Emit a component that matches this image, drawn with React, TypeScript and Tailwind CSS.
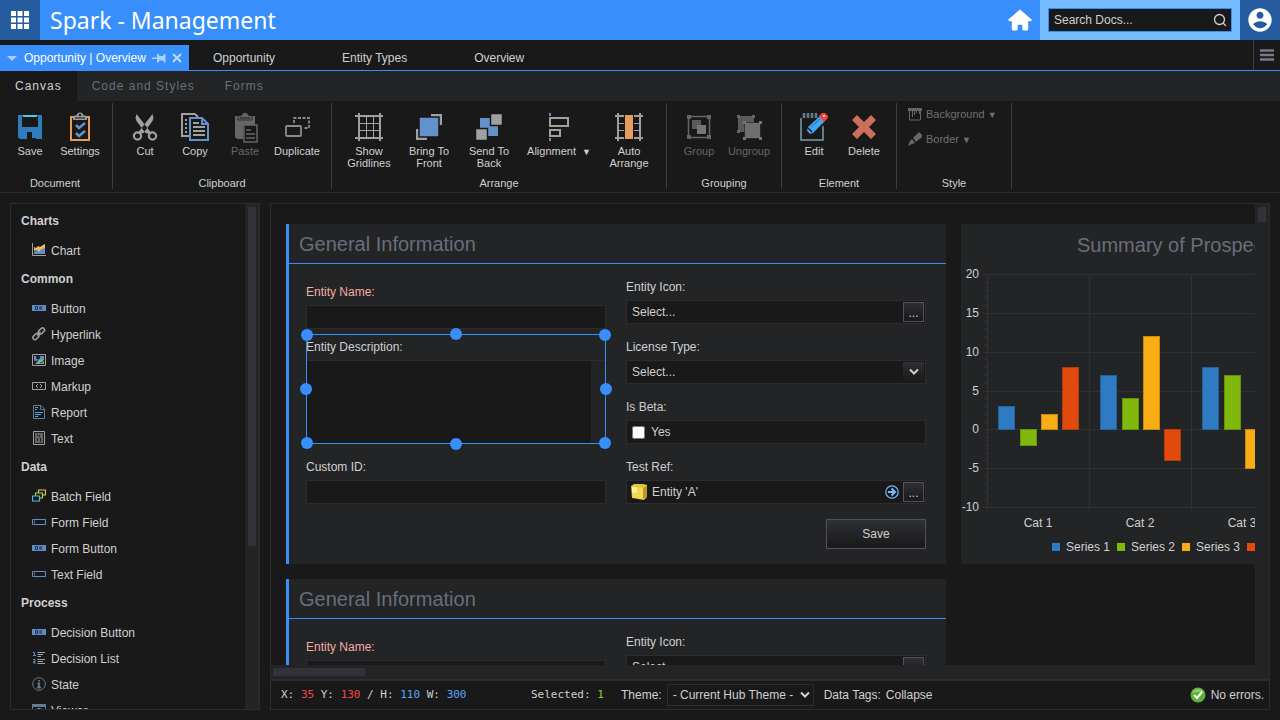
import { useState } from "react";
import type { ReactNode } from "react";
import { RiAccountCircleFill } from "react-icons/ri";
import { TiHome } from "react-icons/ti";

const ribbonIcons: Record<string, ReactNode> = {
  save: (
    <>
      <path d="M4 4h24v24H6l-2-2z" fill="#2e7bbd" />
      <path d="M8 5h16v11H8z" fill="#191919" />
      <path d="M9 4h14v2H9z" fill="#56c4e8" />
      <path d="M13 21h9v7h-9z" fill="#191919" />
      <path d="M18 21h4v6h-4z" fill="#2e7bbd" />
    </>
  ),
  settings: (
    <>
      <path d="M7 6h18v23H7z" fill="none" stroke="#e69c5a" strokeWidth="2" />
      <path d="M9 9V6q0-1.5 2-1.5h1.5q.5-3 3.500-3t3.500 3H21q2 0 2 1.500v3z" fill="#999" />
      <path d="M11 7h10" stroke="#191919" />
      <circle cx="16" cy="4" r="1.2" fill="#191919" />
      <path d="m12 14 3 3 6-5M12 22l3 3 6-5" fill="none" stroke="#6391cb" strokeWidth="2.5" />
    </>
  ),
  cut: (
    <>
      <path d="M7.500 3 6.500 7l1 3 9 12 4 1 1-2zM23.500 3l1 4-1 3-9 12-4 1-1-2z" fill="#a0a0a0" />
      <g fill="#191919" stroke="#a0a0a0" strokeWidth="2.2">
        <circle cx="8.5" cy="25" r="3.600" />
        <circle cx="23.5" cy="25" r="3.600" />
      </g>
      <circle cx="15.5" cy="18" r="1" fill="#191919" />
    </>
  ),
  copy: (
    <>
      <path d="M16 3H3v22h7M16 3l3 3" fill="none" stroke="#a0a0a0" strokeWidth="2" />
      <path d="M6 9h2M6 13h2M6 17h2M6 21h2" stroke="#a0a0a0" strokeWidth="2" />
      <path d="M11 7h12l6 6v16H11z" fill="#191919" stroke="#6391cb" strokeWidth="2" />
      <path d="M23 7v6h6" fill="none" stroke="#6391cb" strokeWidth="2" />
      <path d="M14 12h6M14 16h12M14 20h12M14 24h12" stroke="#a0a0a0" strokeWidth="2" />
    </>
  ),
  paste: (
    <>
      <path d="M6 5h20v9H14v14H8l-2-2z" fill="#666" />
      <path d="M9 9V6q0-1.500 2-1.500h1.500q.5-3 3.500-3t3.500 3H21q2 0 2 1.500v3z" fill="#666" stroke="#191919" strokeWidth=".7" />
      <path d="M11 7h10" stroke="#191919" />
      <path d="M15 14h13v17H15z" fill="#191919" stroke="#666" strokeWidth="1.500" />
      <path d="M17 19h5M17 23h9M17 27h9" stroke="#666" strokeWidth="1.500" />
    </>
  ),
  duplicate: (
    <g fill="none" stroke="#8a8a8a" strokeWidth="1.800">
      <path d="M13 12V7h15v10h-6" strokeDasharray="3 1.500" />
      <rect x="5" y="15" width="15" height="10" rx="1" />
    </g>
  ),
  gridlines: (
    <g stroke="#a0a0a0">
      <path d="M6 2v28M27 2v28M2 5h28M2 27h28" strokeWidth="2" />
      <path d="M13.500 5v22M20.500 5v22M6 12.500h21M6 19.500h21" />
    </g>
  ),
  front: (
    <>
      <path d="M18 3h11v11H18zM3 18h11v11H3z" fill="#a0a0a0" />
      <path d="M6 6h20v20H6z" fill="#6391cb" stroke="#191919" strokeWidth="1.500" />
    </>
  ),
  back: (
    <>
      <path d="M7 7h18v18H7z" fill="#6391cb" />
      <path d="M17.500 2.500h12v12h-12zM2.500 17.500h12v12h-12z" fill="#a0a0a0" stroke="#191919" strokeWidth="1.500" />
    </>
  ),
  alignment: (
    <>
      <path d="M7 2v3M7 27v3" stroke="#6391cb" strokeWidth="2" />
      <path d="M7 7h18v8H7zM7 19h10v6H7z" fill="none" stroke="#a0a0a0" strokeWidth="2" />
    </>
  ),
  auto: (
    <>
      <g stroke="#a0a0a0">
        <path d="M5 2v28M27 2v28M2 5h28M2 27h28" strokeWidth="2" />
        <path d="M5 12.500h22M5 19.500h22" />
      </g>
      <path d="M11 3h10v26H11z" fill="#191919" />
      <path d="M12 4h8v24h-8z" fill="#e69c5a" />
    </>
  ),
  group: (
    <>
      <path d="M5.500 5.500h21v21h-21z" fill="none" stroke="#666" strokeWidth="1.500" />
      <path d="M4 4h4v4H4zM24 4h4v4h-4zM4 24h4v4H4zM24 24h4v4h-4z" fill="#666" />
      <path d="M9 9h9v9H9z" fill="#5a5a5a" />
      <path d="M14 14h9v9h-9z" fill="#757575" />
    </>
  ),
  ungroup: (
    <>
      <path d="M5 5h16v16H5z" fill="#5a5a5a" />
      <path d="M4 4h3v3H4zM19 4h3v3h-3zM4 19h3v3H4z" fill="#666" />
      <path d="M11.500 11.500h16v16h-16z" fill="#6f6f6f" stroke="#191919" strokeWidth=".6" />
      <path d="M10 10h3v3h-3zM26 10h3v3h-3zM10 26h3v3h-3zM26 26h3v3h-3z" fill="#757575" />
    </>
  ),
  edit: (
    <>
      <path d="M3 7v22h22V15" fill="none" stroke="#607d8b" strokeWidth="2" />
      <path d="M6 2v5M10 2v5M14 2v5M18 2v5" stroke="#607d8b" strokeWidth="2.500" />
      <path d="m8 24 2-8 12-11 5 5-12 12z" fill="#42a5f5" />
      <path d="m10 17 4 4M8 24l3-1-2-2z" stroke="#191919" strokeWidth="1.500" />
      <path d="m13 16 9-8" stroke="#1976b8" />
      <path d="m21 5 3-3h3l3 3v2l-4 4z" fill="#f44336" />
      <circle cx="26" cy="5" r="1" fill="#fff" />
    </>
  ),
  delete: <path d="m9 4 7 7 7-7 5 5-7 7 7 7-5 5-7-7-7 7-5-5 7-7-7-7z" fill="#c96f5c" />,
};

const itemIcons: Record<string, ReactNode> = {
  ok: (
    <>
      <path d="M0 4h14v6H0z" fill="#5f8dc9" />
      <path d="M3.500 5.500h2v3h-2zM8 5v4M10.500 5 8.500 7l2 2" fill="none" stroke="#20304a" />
    </>
  ),
  field: (
    <>
      <path d="M.5 4.500h13v5H.5z" fill="none" stroke="#5f8dc9" />
      <path d="M2.500 5.500v3" stroke="#777" />
    </>
  ),
  chart: (
    <>
      <path d="M2 11V9l3-2 3 1 3-3 2-1v7z" fill="#5f8dc9" />
      <path d="M2 8V4l2 1 2-2 2 1 3-2 2-1v4l-3 1-3 3-2-2z" fill="#e6bd69" />
      <path d="M.5 0v12.500H14" fill="none" stroke="#a0a0a0" />
    </>
  ),
  link: (
    <g fill="none" stroke="#a0a0a0" strokeWidth="1.500">
      <rect x="-3.500" y="-2" width="7" height="4" rx="2" transform="translate(4 9.500) rotate(-45)" />
      <rect x="-3.500" y="-2" width="7" height="4" rx="2" transform="translate(9.500 4) rotate(-45)" />
      <path d="m5 8.500 3.500-3.500" />
    </g>
  ),
  image: (
    <>
      <path d="M.5 1.500h13v11H.5z" fill="#191919" stroke="#a0a0a0" />
      <path d="M2 3h10v5H2z" fill="#5f8dc9" />
      <path d="M2 11c3 0 3-4 6-4 2 0 2-1 4-1v5z" fill="#7ab08c" />
      <circle cx="6" cy="4.500" r="2" fill="#191919" />
      <path d="M2 8q3 1 4-1M8 10q3 0 4-3" fill="none" stroke="#283c46" />
    </>
  ),
  markup: (
    <>
      <path d="M.5 3.500h13v7H.5z" fill="none" stroke="#a0a0a0" />
      <path d="M6 5 4 7l2 2M8 5l2 2-2 2" fill="none" stroke="#a0a0a0" />
    </>
  ),
  report: (
    <>
      <path d="M1.500.5H9L12.500 4v9.500h-11z" fill="none" stroke="#607d8b" />
      <path d="M8.500 1v3.500H12" fill="none" stroke="#607d8b" />
      <path d="M3 2.500h3M3 4.500h2M3 7.500h8M3 9.500h6M3 11.500h3" stroke="#42a5f5" />
    </>
  ),
  text: (
    <>
      <path d="M1.500.5h11v13h-11z" fill="none" stroke="#a0a0a0" />
      <path d="M3 2h8v10H3z" fill="#656565" />
      <path d="M5.500 3v2M7.500 4v2M5.500 7v3M8.500 7v4" stroke="#222" />
    </>
  ),
  batch: (
    <g fill="#191919" strokeWidth="1.200">
      <path d="M6.500 1h7v5h-7z" stroke="#e6bd69" />
      <path d="M3.500 4h7v5h-7z" stroke="#9be03c" />
      <path d="M.5 7h7v5h-7z" stroke="#5bb5dc" />
    </g>
  ),
  list: (
    <>
      <path d="M1 1.500h1.500v3M1 4.500h3M1 8.500h2v2H1.500v1.500H4" fill="none" stroke="#5f8dc9" />
      <path d="M5.500 1.500H13M5.500 3.500H11M5.500 5.500H9M5.500 8.500H13M5.500 10.500H11M5.500 12.500H13" stroke="#a0a0a0" />
    </>
  ),
  state: (
    <>
      <circle cx="7" cy="7" r="6.300" fill="none" stroke="#607d8b" />
      <path d="M5.500 6.500H7v4M5 10.500h4M7 3v1.500" fill="none" stroke="#607d8b" strokeWidth="1.800" />
    </>
  ),
  viewer: (
    <>
      <path d="M.5 1.500h13v11H.5z" fill="none" stroke="#607d8b" />
      <path d="M0 1h14v3H0z" fill="#607d8b" />
      <circle cx="7" cy="8" r="3" fill="#42a5f5" />
    </>
  ),
};

const toolbox = [
  { title: "Charts", items: [["Chart", "chart"]] },
  {
    title: "Common",
    items: [
      ["Button", "ok"],
      ["Hyperlink", "link"],
      ["Image", "image"],
      ["Markup", "markup"],
      ["Report", "report"],
      ["Text", "text"],
    ],
  },
  {
    title: "Data",
    items: [
      ["Batch Field", "batch"],
      ["Form Field", "field"],
      ["Form Button", "ok"],
      ["Text Field", "field"],
    ],
  },
  {
    title: "Process",
    items: [
      ["Decision Button", "ok"],
      ["Decision List", "list"],
      ["State", "state"],
      ["Viewer", "viewer"],
    ],
  },
];

const seriesColors = [
  { fill: "#2e7bc1", stroke: "#22629d" },
  { fill: "#80b80c", stroke: "#66930a" },
  { fill: "#f8ad15", stroke: "#c88a0e" },
  { fill: "#e14a0c", stroke: "#b33c0b" },
];

const chartData = [
  { name: "Cat 1", values: [3, -2, 2, 8] },
  { name: "Cat 2", values: [7, 4, 12, -4] },
  { name: "Cat 3", values: [8, 7, -5, 4] },
];

function RibbonButton({ icon, label, width = "w-[50px]", disabled = false, arrow = false }: {
  icon: string;
  label: string;
  width?: string;
  disabled?: boolean;
  arrow?: boolean;
}) {
  return (
    <button
      disabled={disabled}
      className={`${width} flex flex-col items-center gap-0.5 text-[11px] leading-3 ${disabled ? "text-[#666]" : "text-[#d0d0d0]"}`}
    >
      <svg viewBox="0 0 32 32" className="size-8">{ribbonIcons[icon]}</svg>
      <span className={arrow ? "whitespace-nowrap" : "px-1"}>
        {label}
        {arrow && <span className="ml-1.5 text-[9px]">▼</span>}
      </span>
    </button>
  );
}

function RibbonGroup({ title, children, first = false }: { title: string; children: ReactNode; first?: boolean }) {
  return (
    <section className={`${first ? "pl-[5px]" : "pl-[7px]"} pr-[7px] flex flex-col justify-between border-r border-[#3c3c42]`}>
      <div className="flex pt-2">{children}</div>
      <h2 className="text-center text-[11px] leading-3 text-[#d0d0d0]">{title}</h2>
    </section>
  );
}

function Toolbox() {
  return (
    <aside className="w-[250px] shrink-0 flex border border-[#2d2d30] overflow-hidden">
      <div className="flex-1 pt-0.5">
        {toolbox.map((section) => (
          <section key={section.title}>
            <h3 className="h-8 pl-2.5 text-xs leading-[30px] font-bold">{section.title}</h3>
            {section.items.map(([label, icon]) => (
              <a key={label} href="#" className="h-[26px] pl-[21px] flex items-center gap-[5px] text-xs">
                <svg viewBox="0 0 14 14" className="size-3.5 mb-0.5">{itemIcons[icon]}</svg>
                {label}
              </a>
            ))}
          </section>
        ))}
      </div>
      <div className="w-3.5 bg-[#232426] p-[3px]">
        <div className="w-2 h-[68%] bg-[#323238]" />
      </div>
    </aside>
  );
}

const inputClass = "h-6 w-full bg-[#191919] border border-[#2d2d30]";
const labelClass = "block h-6 leading-[22px]";
const dotsClass = "w-[21px] h-5 shrink-0 border border-[#50505c] bg-linear-to-b from-[#2f3035] to-[#191919] leading-5";

const handles = [
  "left-[-5px] top-[-5px]",
  "left-[144px] top-[-6px]",
  "left-[293px] top-[-5px]",
  "left-[-6px] top-[49px]",
  "left-[294px] top-[49px]",
  "left-[-5px] top-[103px]",
  "left-[144px] top-[104px]",
  "left-[293px] top-[103px]",
];

function SelectionFrame() {
  return (
    <div className="absolute inset-0 border border-[#388efa] pointer-events-none">
      <div className="absolute -inset-px">
        {handles.map((pos) => (
          <span key={pos} className={`absolute size-3 rounded-full bg-[#388efa] ${pos}`} />
        ))}
      </div>
    </div>
  );
}

function Chevron() {
  return (
    <svg viewBox="0 0 10 8" className="w-2.5 h-2">
      <path d="m1 1.500 4 4 4-4" fill="none" stroke="#d0d0d0" strokeWidth="2" />
    </svg>
  );
}

function FormCard({ id, selected = false }: { id: string; selected?: boolean }) {
  return (
    <section className="w-[660px] shrink-0 pb-[15px] bg-[#232426] border-l-3 border-[#388efa] text-xs">
      <h2 className="h-10 pl-2.5 text-xl leading-10 text-[#6a6d7c] border-b border-b-[#388efa]">General Information</h2>
      <form className="grid grid-cols-2 gap-5 pl-[17px] pr-5 pt-3" onSubmit={(e) => e.preventDefault()}>
        <div className="pt-[5px]">
          <label htmlFor={`${id}-name`} className={`${labelClass} text-[#f2aca4]`}>Entity Name:</label>
          <input id={`${id}-name`} className={`${inputClass} block px-1`} />
          <div className="relative mt-[5px] h-[110px] pt-0.5">
            <label htmlFor={`${id}-desc`} className={labelClass}>Entity Description:</label>
            <div className="flex h-[84px] border border-[#2d2d30]">
              <textarea id={`${id}-desc`} className="flex-1 bg-[#191919] resize-none" />
              <div className="w-3.5" />
            </div>
            {selected && <SelectionFrame />}
          </div>
          <label htmlFor={`${id}-custom`} className={`${labelClass} mt-3`}>Custom ID:</label>
          <input id={`${id}-custom`} className={`${inputClass} block px-1`} />
        </div>
        <div className="flex flex-col">
          <span className={labelClass}>Entity Icon:</span>
          <div className={`${inputClass} flex items-center justify-between pl-[5px] pr-px mb-3`}>
            <span>Select...</span>
            <button className={dotsClass} aria-label="Pick icon">...</button>
          </div>
          <label htmlFor={`${id}-license`} className={labelClass}>License Type:</label>
          <div className={`${inputClass} relative mb-3`}>
            <select id={`${id}-license`} className="appearance-none w-full h-[22px] pl-[5px] bg-[#191919] outline-none">
              <option>Select...</option>
            </select>
            <span className="absolute right-px top-px w-[21px] h-5 flex items-center justify-center bg-linear-to-b from-[#2f3035] to-[#191919] pointer-events-none">
              <Chevron />
            </span>
          </div>
          <span className={labelClass}>Is Beta:</span>
          <label className={`${inputClass} flex items-center gap-1.5 pl-[5px] mb-3`}>
            <input type="checkbox" className="size-[13px]" />
            Yes
          </label>
          <span className={labelClass}>Test Ref:</span>
          <div className={`${inputClass} flex items-center pl-1 pr-px mb-[15px]`}>
            <svg viewBox="0 0 16 16" className="size-4">
              <path d="m0 2 3-2h9l4 1v12l-3 3-12-2z" fill="#e3c53c" />
              <path d="m1 3 11 1v11L1 13z" fill="#f0da55" />
              <path d="m1 3 5 .5V8L1 9z" fill="#faf0a0" />
              <path d="m12 4 4-2v11l-4 2z" fill="#b99720" />
            </svg>
            <span className="ml-[5px] flex-1">Entity 'A'</span>
            <button aria-label="Open reference" className="mr-1">
              <svg viewBox="0 0 14 14" className="size-3.5" fill="none" stroke="#75bbff">
                <circle cx="7" cy="7" r="6.200" strokeWidth="1.200" />
                <path d="M3 7h7M6.500 3.500 10 7l-3.500 3.500" strokeWidth="2" />
              </svg>
            </button>
            <button className={dotsClass} aria-label="Pick reference">...</button>
          </div>
          <button className="self-end w-[100px] h-[30px] border border-[#50505c] bg-linear-to-b from-[#2f3035] to-[#191919]">
            Save
          </button>
        </div>
      </form>
    </section>
  );
}

const barX = [11, 33, 54, 75];

function ProspectsChart() {
  const y = (v: number) => Math.round(50 + ((20 - v) * 233) / 30);
  const ticks = [20, 15, 10, 5, 0, -5, -10];

  return (
    <section className="w-[440px] h-[340px] shrink-0 bg-[#232426]">
      <svg viewBox="0 0 440 340" className="w-full h-full text-xs" fill="#d0d0d0">
        <text x="116" y="28" className="text-xl" fill="#6a6d7c">Summary of Prospects</text>
        <g stroke="#2f3033">
          {ticks.map((t) => (
            <path key={t} d={`M22 ${y(t) + 0.5}H434`} />
          ))}
          {[0, 1, 2, 3].map((i) => (
            <path key={i} d={`M${26.5 + i * 102} 50v237`} />
          ))}
          {Array.from({ length: 31 }, (_, i) => (
            <path key={i} d={`M23 ${y(20 - i) + 0.5}h4`} />
          ))}
        </g>
        {ticks.map((t) => (
          <text key={t} x="18" y={y(t) + 4} textAnchor="end">{t}</text>
        ))}
        {chartData.map((cat, i) => (
          <g key={cat.name}>
            {cat.values.map((v, j) => (
              <rect
                key={j}
                x={26.5 + i * 102 + barX[j]}
                y={y(Math.max(v, 0)) + 0.5}
                width={16}
                height={Math.abs(y(v) - y(0))}
                fill={seriesColors[j].fill}
                stroke={seriesColors[j].stroke}
              />
            ))}
            <text x={77 + i * 102} y="303" textAnchor="middle">{cat.name}</text>
          </g>
        ))}
        {seriesColors.map((c, i) => (
          <g key={c.fill}>
            <rect x={91 + i * 65} y="319" width="8" height="8" fill={c.fill} />
            <text x={105 + i * 65} y="327">Series {i + 1}</text>
          </g>
        ))}
      </svg>
    </section>
  );
}

function StatusBar() {
  return (
    <footer className="h-[30px] shrink-0 flex items-center border-t-2 border-[#2d2d30] pl-2.5 pr-[5px] text-xs">
      <p className="w-[250px] font-['DejaVu_Sans_Mono',monospace] text-[11px] whitespace-pre">
        X: <span className="text-[#f04848]">35</span> Y: <span className="text-[#f04848]">130</span> / H:{" "}
        <span className="text-[#58a6ff]">110</span> W: <span className="text-[#58a6ff]">300</span>
      </p>
      <p className="w-[90px] font-['DejaVu_Sans_Mono',monospace] text-[11px]">
        Selected: <span className="text-[#7ed321]">1</span>
      </p>
      <label htmlFor="theme">Theme:</label>
      <div className="relative ml-[5px] mr-2.5">
        <select id="theme" className="appearance-none block w-[147px] h-[22px] pl-[5px] bg-[#191919] border border-[#2d2d30]">
          <option>- Current Hub Theme -</option>
        </select>
        <span className="absolute right-1 top-[7px] pointer-events-none"><Chevron /></span>
      </div>
      <span>Data Tags:</span>
      <button className="ml-[5px]">Collapse</button>
      <span className="ml-auto flex items-center gap-[5px]">
        <svg viewBox="0 0 16 16" className="size-4">
          <circle cx="8" cy="8" r="7.500" fill="#5fae3a" />
          <path d="M2 6a6.500 6.500 0 0 1 12 0q-6-2-12 0" fill="#8fd06a" />
          <path d="m4 8 3 3 5-6" fill="none" stroke="#fff" strokeWidth="2" />
        </svg>
        No errors.
      </span>
    </footer>
  );
}

export default function App() {
  const [tab, setTab] = useState("Canvas");

  return (
    <div className="h-screen flex flex-col bg-[#191919] text-[#d0d0d0] font-['Liberation_Sans',Arial,sans-serif] overflow-hidden">
      <header className="h-10 shrink-0 flex items-center bg-[#388efa]">
        <button className="size-10 flex items-center justify-center bg-[#245c9f]" aria-label="Apps">
          <svg viewBox="0 0 18 18" className="size-[18px]" fill="#fff">
            {[0, 1, 2].map((r) => [0, 1, 2].map((c) => (
              <rect key={`${r}${c}`} x={c * 6.5} y={r * 6.5} width="5" height="5" />
            )))}
          </svg>
        </button>
        <h1 className="ml-2.5 flex-1 font-['Noto_Sans',sans-serif] text-[23px] leading-[38px] text-white">Spark - Management</h1>
        <a href="#" className="mr-1.5 text-white" aria-label="Home"><TiHome size={28} /></a>
        <div className="w-[200px] h-10 p-2 bg-[#75bbff]">
          <div className="h-6 flex items-center bg-[#191919] border border-[#388efa] pl-[5px] pr-1">
            <input aria-label="Search Docs" placeholder="Search Docs..." className="flex-1 min-w-0 text-xs outline-none placeholder:text-[#d0d0d0]" />
            <svg viewBox="0 0 14 14" className="size-3.5" fill="none" stroke="#d0d0d0" strokeWidth="1.300">
              <circle cx="6.500" cy="6.500" r="5" />
              <path d="m10 10 3 3" />
            </svg>
          </div>
        </div>
        <button className="size-10 flex items-center justify-center bg-[#245c9f] text-white" aria-label="Account">
          <RiAccountCircleFill size={28} />
        </button>
      </header>

      {/* Open pages */}
      <nav className="h-[31px] shrink-0 flex items-end border-b border-[#388efa] text-xs">
        <div className="h-[25px] w-[189px] flex items-center bg-[#388efa] text-white pl-[7px] pt-px">
          <svg viewBox="0 0 10 5" className="w-2.5 h-[5px]"><path d="M0 0h10L5 5z" fill="#a9cffd" /></svg>
          <a href="#" className="ml-[7px]">Opportunity | Overview</a>
          <svg viewBox="0 0 14 10" className="w-3.5 h-2.5 ml-1.5" fill="#a9cffd">
            <path d="M0 4.500h5v1.500H0zM5 1h1.500l1 2H11l1-2h1.500v8.500H12l-1-2H7.500l-1 2H5z" />
          </svg>
          <button className="ml-1.5" aria-label="Close tab">
            <svg viewBox="0 0 10 10" className="size-2.5"><path d="m1 1 8 8M9 1 1 9" stroke="#bcdafd" strokeWidth="2" /></svg>
          </button>
        </div>
        {["Opportunity", "Entity Types", "Overview"].map((t) => (
          <a key={t} href="#" className="h-[25px] leading-[26px] pl-6 pr-[43px]">{t}</a>
        ))}
        <button className="ml-auto w-[27px] h-[30px] flex items-center justify-center border-l border-[#3c3c42]" aria-label="Menu">
          <svg viewBox="0 0 14 12" className="w-3.5 h-3"><path d="M0 1.500h14M0 6h14M0 10.500h14" stroke="#777a88" strokeWidth="2.400" /></svg>
        </button>
      </nav>

      {/* Ribbon */}
      <div className="h-[30px] shrink-0 flex bg-[#232426] text-xs tracking-[1px]">
        {["Canvas", "Code and Styles", "Forms"].map((t) => (
          <button
            key={t}
            onClick={() => setTab(t)}
            className={`px-[15px] ${tab === t ? "bg-[#191919]" : "text-[#6a6d7c]"}`}
          >
            {t}
          </button>
        ))}
      </div>
      <div className="h-[92px] shrink-0 flex pt-0.5 pb-[3px] border-b border-[#2d2d30]">
        <RibbonGroup title="Document" first>
          <RibbonButton icon="save" label="Save" />
          <RibbonButton icon="settings" label="Settings" />
        </RibbonGroup>
        <RibbonGroup title="Clipboard">
          <RibbonButton icon="cut" label="Cut" />
          <RibbonButton icon="copy" label="Copy" />
          <RibbonButton icon="paste" label="Paste" disabled />
          <RibbonButton icon="duplicate" label="Duplicate" width="w-[54px]" />
        </RibbonGroup>
        <RibbonGroup title="Arrange">
          <RibbonButton icon="gridlines" label="Show Gridlines" width="w-[60px]" />
          <RibbonButton icon="front" label="Bring To Front" width="w-[60px]" />
          <RibbonButton icon="back" label="Send To Back" width="w-[60px]" />
          <RibbonButton icon="alignment" label="Alignment" width="w-20" arrow />
          <RibbonButton icon="auto" label="Auto Arrange" width="w-[60px]" />
        </RibbonGroup>
        <RibbonGroup title="Grouping">
          <RibbonButton icon="group" label="Group" disabled />
          <RibbonButton icon="ungroup" label="Ungroup" disabled />
        </RibbonGroup>
        <RibbonGroup title="Element">
          <RibbonButton icon="edit" label="Edit" />
          <RibbonButton icon="delete" label="Delete" />
        </RibbonGroup>
        <RibbonGroup title="Style">
          <div className="w-[100px] flex flex-col gap-[9px] pl-1 text-[11px] text-[#707070] -mt-[5px]">
            <button disabled className="h-4 flex items-center gap-1">
              <svg viewBox="0 0 14 14" className="size-3.5">
                <path d="M1.500 3v10h11V3" fill="none" stroke="#666" />
                <path d="M0 1h14v3h-2v3h-1V4H9v2H8V4H7v4H6V4H5v6H4V4H0z" fill="#666" />
              </svg>
              <span>Background <span className="text-[9px]">▼</span></span>
            </button>
            <button disabled className="h-4 flex items-center gap-1">
              <svg viewBox="0 0 14 14" className="size-3.5">
                <path d="m5 6 6-6 3 3v2L8 10z" fill="#666" />
                <path d="m4 7 3 4-3 1-4 2 2-5z" fill="#666" />
              </svg>
              <span>Border <span className="text-[9px]">▼</span></span>
            </button>
          </div>
        </RibbonGroup>
      </div>

      <main className="flex-1 min-h-0 flex gap-2.5 p-2.5">
        <Toolbox />
        <div className="flex-1 min-w-0 flex flex-col border border-[#2d2d30]">
          <div className="flex-1 min-h-0 flex">
            <div className="flex-1 min-w-0 flex gap-[15px] pl-[15px] pt-5 overflow-hidden">
              <div className="shrink-0 flex flex-col gap-[15px]">
                <FormCard id="form1" selected />
                <FormCard id="form2" />
              </div>
              <ProspectsChart />
            </div>
            <div className="w-3.5 bg-[#232426] p-[3px]">
              <div className="w-2 h-[15px] bg-[#323238]" />
            </div>
          </div>
          <div className="h-3.5 shrink-0 bg-[#232426] px-0.5 py-[3px]">
            <div className="w-[92px] h-2 bg-[#323238]" />
          </div>
          <StatusBar />
        </div>
      </main>
    </div>
  );
}
